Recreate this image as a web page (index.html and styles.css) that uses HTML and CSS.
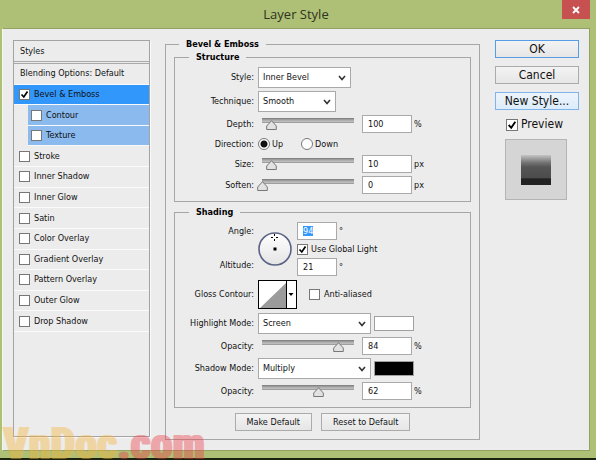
FILE: index.html
```html
<!DOCTYPE html>
<html lang="en">
  <head>
    <meta charset="UTF-8" />
    <meta name="viewport" content="width=device-width, initial-scale=1.0" />
    <title>Layer Style</title>
    <link rel="stylesheet" href="styles.css">
  </head>

  <body>
    <div class="window">
      <header class="titlebar">
        <h1>Layer Style</h1>
        <button class="close" aria-label="Close">
          <svg width="8" height="8" viewBox="0 0 8 8"><path d="M1 1l6 6M7 1l-6 6" stroke="#fff" stroke-width="1.8" /></svg>
        </button>
      </header>

      <div class="panel">
        <aside class="sidebar">
          <div class="side-title">Styles</div>
          <ul class="styles">
            <li>Blending Options: Default</li>
            <li class="active"><label><input type="checkbox" checked />Bevel &amp; Emboss</label></li>
            <li class="sub"><label><input type="checkbox" />Contour</label></li>
            <li class="sub"><label><input type="checkbox" />Texture</label></li>
            <li><label><input type="checkbox" />Stroke</label></li>
            <li><label><input type="checkbox" />Inner Shadow</label></li>
            <li><label><input type="checkbox" />Inner Glow</label></li>
            <li><label><input type="checkbox" />Satin</label></li>
            <li><label><input type="checkbox" />Color Overlay</label></li>
            <li><label><input type="checkbox" />Gradient Overlay</label></li>
            <li><label><input type="checkbox" />Pattern Overlay</label></li>
            <li><label><input type="checkbox" />Outer Glow</label></li>
            <li><label><input type="checkbox" />Drop Shadow</label></li>
          </ul>
        </aside>

        <fieldset class="main">
          <legend>Bevel &amp; Emboss</legend>

          <fieldset class="group">
            <legend>Structure</legend>
            <div class="form">
              <label for="style">Style:</label>
              <div class="row"><select id="style" class="w-style"><option>Inner Bevel</option></select></div>

              <label for="technique">Technique:</label>
              <div class="row"><select id="technique" class="w-technique"><option>Smooth</option></select></div>

              <label for="depth">Depth:</label>
              <div class="row">
                <input type="range" max="1000" value="100" aria-label="Depth slider" />
                <input type="text" id="depth" value="100" /><span>%</span>
              </div>

              <span class="name">Direction:</span>
              <div class="row direction">
                <label><input type="radio" name="direction" checked />Up</label>
                <label><input type="radio" name="direction" />Down</label>
              </div>

              <label for="size">Size:</label>
              <div class="row">
                <input type="range" value="10" aria-label="Size slider" />
                <input type="text" id="size" value="10" /><span>px</span>
              </div>

              <label for="soften">Soften:</label>
              <div class="row">
                <input type="range" value="0" aria-label="Soften slider" />
                <input type="text" id="soften" value="0" /><span>px</span>
              </div>
            </div>
          </fieldset>

          <fieldset class="group">
            <legend>Shading</legend>
            <div class="form">
              <div class="light-names">
                <label for="angle">Angle:</label>
                <label for="altitude">Altitude:</label>
              </div>
              <div class="row light">
                <svg width="34" height="34" viewBox="0 0 34 34">
                  <defs>
                    <linearGradient id="dial" x1="0" y1="0" x2="0" y2="1">
                      <stop offset="0" stop-color="#fff" />
                      <stop offset="1" stop-color="#e4e4e4" />
                    </linearGradient>
                  </defs>
                  <circle cx="17" cy="17" r="16" fill="url(#dial)" stroke="#5b6385" stroke-width="1.6" />
                  <rect x="15.5" y="15.5" width="3" height="3" fill="#000" />
                  <path d="M16.500 2v2M16.500 7v2M13 5.500h2M18 5.500h2" stroke="#000" />
                </svg>
                <div class="light-fields">
                  <div class="row"><input type="text" id="angle" class="short" value="94" /><span>°</span></div>
                  <label><input type="checkbox" checked />Use Global Light</label>
                  <div class="row"><input type="text" id="altitude" class="short" value="21" /><span>°</span></div>
                </div>
              </div>

              <span class="name">Gloss Contour:</span>
              <div class="row gloss">
                <button class="contour" aria-label="Gloss contour">
                  <svg width="39" height="29" viewBox="0 0 39 29">
                    <rect x="0.5" y="0.5" width="38" height="28" fill="#fff" stroke="#000" />
                    <path d="M2 28L28 3V28z" fill="#9b9b9b" />
                    <rect x="28" y="1" width="1" height="27" fill="#000" />
                    <path d="M30.500 13h5L33 16z" fill="#000" />
                  </svg>
                </button>
                <label><input type="checkbox" />Anti-aliased</label>
              </div>

              <label for="highlight">Highlight Mode:</label>
              <div class="row">
                <select id="highlight" class="w-mode"><option>Screen</option></select>
                <button class="swatch white" aria-label="Highlight color"></button>
              </div>

              <label for="highlightOpacity">Opacity:</label>
              <div class="row">
                <input type="range" value="84" aria-label="Highlight opacity slider" />
                <input type="text" id="highlightOpacity" value="84" /><span>%</span>
              </div>

              <label for="shadow">Shadow Mode:</label>
              <div class="row">
                <select id="shadow" class="w-mode"><option>Multiply</option></select>
                <button class="swatch black" aria-label="Shadow color"></button>
              </div>

              <label for="shadowOpacity">Opacity:</label>
              <div class="row">
                <input type="range" value="62" aria-label="Shadow opacity slider" />
                <input type="text" id="shadowOpacity" value="62" /><span>%</span>
              </div>
            </div>
          </fieldset>

          <div class="defaults">
            <button>Make Default</button>
            <button>Reset to Default</button>
          </div>
        </fieldset>

        <div class="actions">
          <button class="ok">OK</button>
          <button>Cancel</button>
          <button class="new">New Style...</button>
          <label><input type="checkbox" checked />Preview</label>
          <div class="preview"><div class="sample"></div></div>
        </div>
      </div>
    </div>
    <div class="watermark">VnDoc<span>.com</span></div>

    <script>
      document.getElementById("angle").select();
    </script>
  </body>
</html>
```
FILE: styles.css
```css
* {
  box-sizing: border-box;
  margin: 0;
  padding: 0;
}

body {
  position: relative;
  padding: 0 4px 3px 0;
  background: #ffffff;
  color: #111111;
  font-family: "DejaVu Sans Condensed", "DejaVu Sans", sans-serif;
  font-size: 9px;
  line-height: 13px;
}

button,
input,
select {
  font: inherit;
  color: inherit;
}

.window {
  padding: 0 6px 7px 2px;
  background: #aebf76;
  border-bottom: 2px solid #1c2210;
}

.titlebar {
  display: grid;
  grid-template-columns: 1fr auto 1fr;
  height: 28px;
}

.titlebar h1 {
  grid-column: 2;
  color: #2f3320;
  font-family: "Open Sans", sans-serif;
  font-size: 13px;
  font-weight: 400;
  line-height: 28px;
}

.close {
  display: flex;
  justify-self: end;
  align-items: center;
  justify-content: center;
  width: 28px;
  height: 19px;
  border: none;
  background: #c75050;
}

.panel {
  display: flex;
  gap: 15px;
  padding: 9px 10px 10px;
  background: #ececec;
  border: 1px solid #93a263;
  border-left-color: #f4f7e8;
}

/* style list */
.sidebar {
  flex: 0 0 137px;
  margin: 2px 0 3px;
  border: 1px solid #a3a3a3;
  box-shadow: 1px 1px #fafafa;
}

.side-title {
  height: 23px;
  padding-left: 6px;
  border-bottom: 3px double #a8a8a8;
  line-height: 21px;
}

.styles {
  display: grid;
  grid-auto-rows: 1fr;
  height: 268px;
  list-style: none;
}

.styles li {
  display: flex;
  align-items: center;
  padding-left: 5px;
  border-bottom: 1px solid #fafafa;
}

.styles li:first-child {
  padding-left: 6px;
}

.styles .active {
  background: #3197fb;
}

.styles .sub {
  margin-left: 14px;
  padding-left: 3px;
  background: #8abaee;
}

label {
  display: flex;
  align-items: center;
}

input[type="checkbox"] {
  appearance: none;
  flex: none;
  width: 11px;
  height: 11px;
  margin-right: 4px;
  background: #ffffff;
  border: 1px solid #777777;
}

input[type="checkbox"]:checked {
  background: #ffffff url("data:image/svg+xml,%3Csvg xmlns='http://www.w3.org/2000/svg' viewBox='0 0 9 9'%3E%3Cpath d='M1.500 4.500l2.300 2.500L7.500 1.500' fill='none' stroke='%23000' stroke-width='1.700'/%3E%3C/svg%3E");
}

/* settings */
fieldset {
  min-width: 0;
  border: 1px solid #a6a6a6;
}

legend {
  color: #000000;
  font-weight: 700;
  padding: 0 7px;
}

.main {
  flex: 1;
  padding: 0 8px 8px;
}

.main > legend {
  margin-left: 5px;
}

.group {
  padding: 3px 0 7px;
}

.group > legend {
  margin-left: 14px;
}

.group + .group {
  margin-top: 4px;
}

.form {
  display: grid;
  grid-template-columns: 79px 1fr;
  gap: 3px 4px;
}

.form > label,
.form > .name {
  display: block;
  align-self: center;
  text-align: right;
  white-space: nowrap;
}

.row {
  display: flex;
  align-items: center;
}

.row span {
  margin-left: 2px;
}

select {
  appearance: none;
  height: 21px;
  padding-left: 4px;
  background: #ffffff url("data:image/svg+xml,%3Csvg xmlns='http://www.w3.org/2000/svg' width='8' height='6'%3E%3Cpath d='M1 1l3 3.500L7 1' fill='none' stroke='%23333' stroke-width='1.600'/%3E%3C/svg%3E") no-repeat right 4px center;
  border: 1px solid #a9a9a9;
}

.w-style {
  width: 93px;
}

.w-technique {
  width: 78px;
}

.w-mode {
  width: 113px;
}

input[type="text"] {
  width: 50px;
  height: 18px;
  padding-left: 5px;
  background: #ffffff;
  border: 1px solid #a9a9a9;
  outline: none;
}

input[type="text"].short {
  width: 40px;
}

input::selection {
  background: #3399ff;
  color: #ffffff;
}

input[type="range"] {
  appearance: none;
  width: 102px;
  height: 16px;
  margin: 0 3px 0 -1px;
  background: transparent;
}

input[type="range"]::-webkit-slider-runnable-track {
  height: 12px;
  background: linear-gradient(#777777, #a9a9a9 40%, #bdbdbd 70%, #8f8f8f) no-repeat center 0 / calc(100% - 10px) 5px;
}

input[type="range"]::-webkit-slider-thumb {
  appearance: none;
  width: 11px;
  height: 10px;
  margin-top: 2px;
  background: url("data:image/svg+xml,%3Csvg xmlns='http://www.w3.org/2000/svg' viewBox='0 0 11 10'%3E%3Cpath d='M5.500.700L10.300 6v3.500H.700V6z' fill='%23e2e2e2' stroke='%23777'/%3E%3C/svg%3E");
}

.direction {
  gap: 18px;
  height: 16px;
}

input[type="radio"] {
  appearance: none;
  width: 12px;
  height: 12px;
  margin-right: 2px;
  background: #ffffff;
  border: 1px solid #777777;
  border-radius: 50%;
}

input[type="radio"]:checked {
  background: radial-gradient(#111111 3px, #ffffff 4px);
}

.light-names {
  display: flex;
  flex-direction: column;
  justify-content: space-between;
  align-items: flex-end;
  padding: 3px 0 4px;
}

.light {
  gap: 5px;
}

.light-fields {
  display: grid;
  gap: 3px;
}

.light-fields label {
  height: 12px;
}

.light-fields input[type="checkbox"] {
  margin-right: 3px;
}

.gloss {
  gap: 12px;
  height: 31px;
}

.contour {
  display: flex;
  border: none;
  background: none;
}

.swatch {
  width: 40px;
  height: 15px;
  margin-left: 3px;
  border: 1px solid #a0a0a0;
}

.white {
  background: #ffffff;
}

.black {
  background: #000000;
}

.defaults {
  display: flex;
  justify-content: center;
  gap: 9px;
  margin-top: 5px;
}

.defaults button,
.actions button {
  height: 18px;
  padding: 0 11px;
  background: linear-gradient(#f3f3f3, #e6e6e6);
  border: 1px solid #ababab;
}

/* right column */
.actions {
  display: flex;
  flex: 0 0 84px;
  flex-direction: column;
  gap: 8px;
  margin-top: 2px;
  font-size: 12px;
}

.actions button {
  padding: 0;
}

.actions .ok {
  border-color: #569de5;
}

.actions .new {
  background: linear-gradient(#ecf4fc, #dcecfb);
  border-color: #7eb4ea;
}

.actions label {
  margin-left: 11px;
}

.actions input[type="checkbox"] {
  width: 12px;
  height: 12px;
  margin-right: 3px;
}

.preview {
  display: grid;
  place-items: center;
  width: 62px;
  height: 61px;
  margin-left: 10px;
  background: #d5d5d5;
  border: 1px solid #b4b4b4;
}

.sample {
  width: 30px;
  height: 30px;
  background: linear-gradient(#c4c4c4, #757575 25%, #555555 40%, #4c4c4c 75%, #222222 80%, #222222);
}

.watermark {
  position: absolute;
  left: 2px;
  bottom: 0;
  color: #f8b53a;
  font-family: "Liberation Sans Narrow", "Roboto Condensed", "Open Sans Condensed", sans-serif;
  font-size: 44px;
  font-weight: 900;
  line-height: 38px;
  opacity: 0.4;
  text-shadow: 1px 0 currentColor, 2px 0 currentColor;
  pointer-events: none;
}

.watermark span {
  color: #ee4048;
}
```
